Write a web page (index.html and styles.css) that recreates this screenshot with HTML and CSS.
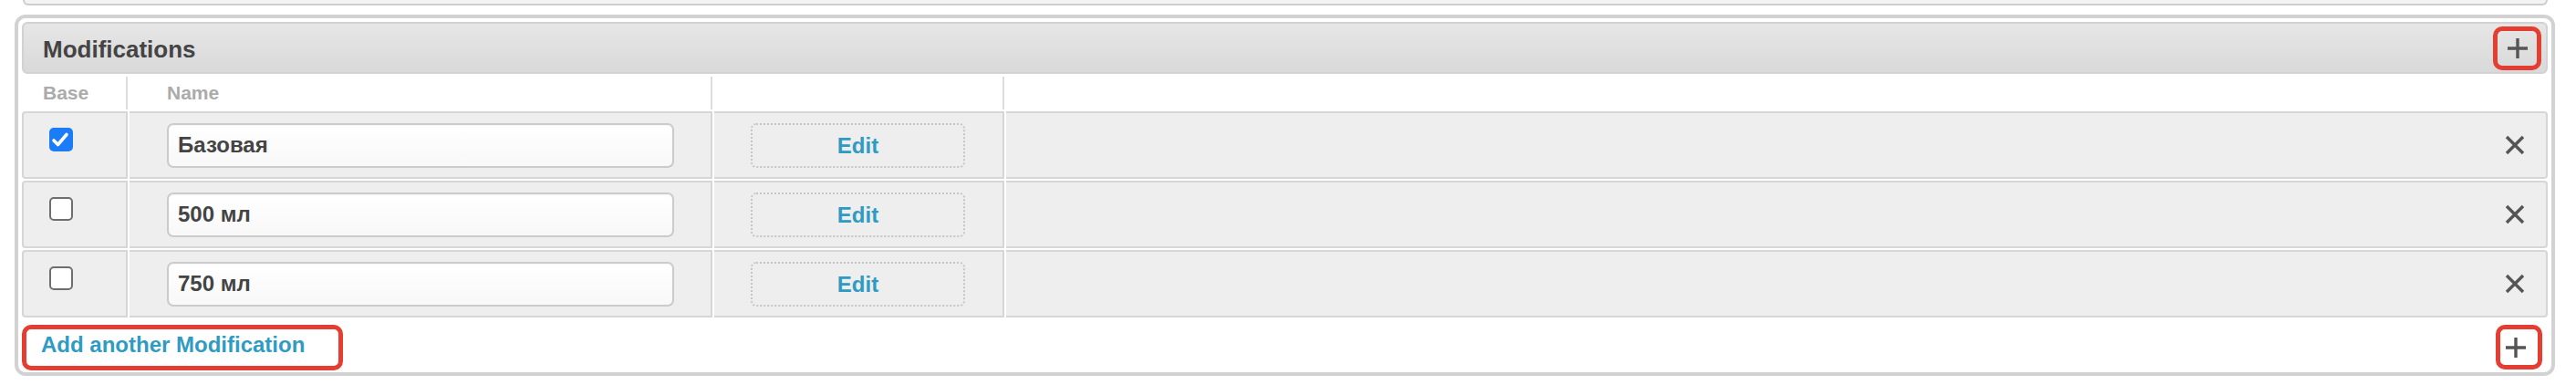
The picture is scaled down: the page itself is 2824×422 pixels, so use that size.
FILE: index.html
```html
<!DOCTYPE html>
<html lang="en">
<head>
<meta charset="utf-8">
<title>Modifications</title>
<link rel="stylesheet" href="styles.css">
</head>
<body>
<div class="prev-box"></div>
<div class="group">
  <div class="group-header">
    <h2 class="group-title">Modifications</h2>
    <button class="icon-btn annot" type="button" aria-label="Add">
      <svg class="plus" viewBox="0 0 24 24" width="24" height="24"><path d="M12 1V23M1 12H23" /></svg>
    </button>
  </div>
  <div class="thead">
    <div class="th c1">Base</div>
    <div class="th c2">Name</div>
    <div class="th c3"></div>
    <div class="th c4"></div>
  </div>
  <div class="row">
    <div class="td c1"><span class="cb checked"><svg viewBox="0 0 26 26" width="26" height="26"><path d="M5 14l4.5 4.5L19 7.5" /></svg></span></div>
    <div class="td c2"><input class="text-input" type="text" value="Базовая"></div>
    <div class="td c3"><a class="edit-btn">Edit</a></div>
    <div class="td c4"><a class="del" aria-label="Delete"><svg viewBox="0 0 22 22" width="22" height="22"><path d="M2 2L20 20M20 2L2 20" /></svg></a></div>
  </div>
  <div class="row">
    <div class="td c1"><span class="cb"></span></div>
    <div class="td c2"><input class="text-input" type="text" value="500 мл"></div>
    <div class="td c3"><a class="edit-btn">Edit</a></div>
    <div class="td c4"><a class="del" aria-label="Delete"><svg viewBox="0 0 22 22" width="22" height="22"><path d="M2 2L20 20M20 2L2 20" /></svg></a></div>
  </div>
  <div class="row">
    <div class="td c1"><span class="cb"></span></div>
    <div class="td c2"><input class="text-input" type="text" value="750 мл"></div>
    <div class="td c3"><a class="edit-btn">Edit</a></div>
    <div class="td c4"><a class="del" aria-label="Delete"><svg viewBox="0 0 22 22" width="22" height="22"><path d="M2 2L20 20M20 2L2 20" /></svg></a></div>
  </div>
  <div class="footer">
    <a class="add-link annot">Add another Modification</a>
    <button class="icon-btn icon-btn-bottom annot" type="button" aria-label="Add">
      <svg class="plus" viewBox="0 0 24 24" width="24" height="24"><path d="M12 1V23M1 12H23" /></svg>
    </button>
  </div>
</div>
</body>
</html>
```

FILE: styles.css
```css
* { box-sizing: border-box; }

body {
  margin: 0;
  background: #ffffff;
  font-family: "Liberation Sans", Arial, Helvetica, sans-serif;
  color: #444444;
}

.prev-box {
  margin: 0 31px 0 25px;
  height: 6px;
  border: 2px solid #cdcdcd;
  border-top: none;
  border-radius: 0 0 8px 8px;
  background: #f3f3f3;
}

.group {
  margin: 10px 23px 0 16px;
  border: 4px solid #d2d2d2;
  border-radius: 12px;
  padding: 4px 4px 2px;
  background: #ffffff;
}

.group-header {
  height: 57px;
  border: 2px solid #d2d2d2;
  border-radius: 6px;
  background: linear-gradient(#e6e6e6, #d9d9d9);
  display: flex;
  align-items: center;
  justify-content: space-between;
  padding: 0 5px 0 21px;
}

.group-title {
  margin: 0;
  padding-top: 4px;
  font-size: 26px;
  font-weight: bold;
  color: #444444;
}

.icon-btn {
  width: 53px;
  height: 48px;
  border: 5px solid #e43d31;
  border-radius: 10px;
  background: transparent;
  padding: 0;
  display: flex;
  align-items: center;
  justify-content: center;
}

.icon-btn-bottom {
  width: 51px;
  height: 49px;
  margin-right: 6px;
  justify-content: flex-start;
  padding-left: 5px;
}

.plus path,
.del path {
  stroke: #555555;
  stroke-width: 3.4;
  fill: none;
}

.thead {
  display: flex;
  gap: 2px;
  padding: 3px 0 2px;
}

.th {
  height: 36px;
  line-height: 36px;
  font-size: 21px;
  font-weight: bold;
  color: #ababab;
  border-right: 2px solid #dddddd;
}

.c1 { width: 116px; padding-left: 23px; }
.c2 { width: 639px; padding-left: 41px; }
.c3 { width: 318px; padding-left: 40px; }
.c4 { flex: 1; }
.th.c4 { border-right: none; }

.row {
  display: flex;
  gap: 2px;
  height: 74px;
}

.row + .row { margin-top: 2px; }

.td {
  background: #eeeeee;
  border-top: 2px solid #d6d6d6;
  border-bottom: 2px solid #d6d6d6;
  border-right: 2px solid #d6d6d6;
}

.td.c1 {
  border-left: 2px solid #d6d6d6;
  border-radius: 4px 0 0 4px;
  padding: 16px 0 0 28px;
}

.td.c2,
.td.c3 {
  display: flex;
  align-items: center;
}

.td.c4 {
  border-radius: 0 4px 4px 0;
  display: flex;
  align-items: center;
  justify-content: flex-end;
  padding-right: 23px;
}

.cb {
  display: block;
  width: 26px;
  height: 26px;
  border: 2px solid #6e6e6e;
  border-radius: 5px;
  background: #ffffff;
}

.cb.checked {
  border: none;
  background: #1a7cf6;
}

.cb svg { display: block; }

.cb svg path {
  stroke: #ffffff;
  stroke-width: 3.6;
  fill: none;
  stroke-linecap: round;
  stroke-linejoin: round;
}

.text-input {
  width: 556px;
  height: 49px;
  border: 2px solid #cbcbcb;
  border-radius: 7px;
  padding: 0 10px;
  background: linear-gradient(#ffffff, #f8f8f8);
  box-shadow: inset 0 1px 2px rgba(0, 0, 0, 0.04);
  font-family: "Liberation Sans", Arial, Helvetica, sans-serif;
  font-size: 24px;
  font-weight: bold;
  color: #444444;
}

.edit-btn {
  display: block;
  width: 235px;
  height: 49px;
  border: 2px dotted #c6c6c6;
  border-radius: 6px;
  text-align: center;
  line-height: 45px;
  font-size: 24px;
  font-weight: bold;
  color: #2f9bc3;
}

.del svg { display: block; }

.footer {
  display: flex;
  justify-content: space-between;
  align-items: flex-start;
  margin-top: 8px;
}

.add-link {
  display: block;
  width: 352px;
  height: 50px;
  border: 5px solid #e43d31;
  border-radius: 10px;
  padding: 3px 0 0 16px;
  font-size: 24px;
  font-weight: bold;
  color: #2f9bc3;
}
```
